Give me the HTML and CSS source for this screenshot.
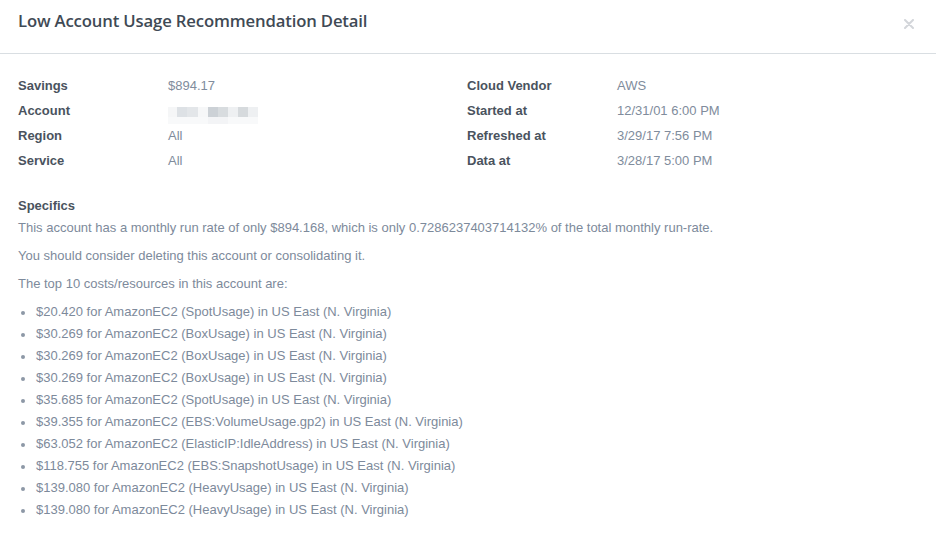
FILE: index.html
```html
<!DOCTYPE html>
<html>
<head>
<meta charset="utf-8">
<link rel="stylesheet" href="styles.css">
</head>
<body>
<div class="modal">
  <div class="modal-header">
    <h1 class="title">Low Account Usage Recommendation Detail</h1>
    <svg class="close" width="10" height="10" viewBox="0 0 10 10"><path d="M1 1 L9 9 M9 1 L1 9" stroke="#d3d6da" stroke-width="2" stroke-linecap="round"/></svg>
  </div>
  <div class="modal-body">
    <div class="details">
      <div class="col">
        <div class="row"><span class="label">Savings</span><span class="value">$894.17</span></div>
        <div class="row"><span class="label">Account</span><span class="value"><span class="mosaic">
          <span class="tiles"><i class="t t1"></i><i class="t t2"></i><i class="t t3"></i><i class="t t4"></i><i class="t t5"></i><i class="t t6"></i><i class="t t7"></i><i class="t t8"></i><i class="t t9"></i></span>
          <span class="tiles low"><i class="t"></i><i class="t"></i><i class="t"></i><i class="t"></i><i class="t t5l"></i><i class="t t5l"></i><i class="t"></i><i class="t"></i><i class="t"></i></span>
        </span></span></div>
        <div class="row"><span class="label">Region</span><span class="value">All</span></div>
        <div class="row"><span class="label">Service</span><span class="value">All</span></div>
      </div>
      <div class="col">
        <div class="row"><span class="label">Cloud Vendor</span><span class="value">AWS</span></div>
        <div class="row"><span class="label">Started at</span><span class="value">12/31/01 6:00 PM</span></div>
        <div class="row"><span class="label">Refreshed at</span><span class="value">3/29/17 7:56 PM</span></div>
        <div class="row"><span class="label">Data at</span><span class="value">3/28/17 5:00 PM</span></div>
      </div>
    </div>
    <div class="specifics">
      <h2 class="spec-title">Specifics</h2>
      <p>This account has a monthly run rate of only $894.168, which is only 0.7286237403714132% of the total monthly run-rate.</p>
      <p>You should consider deleting this account or consolidating it.</p>
      <p>The top 10 costs/resources in this account are:</p>
      <ul class="list">
        <li>$20.420 for AmazonEC2 (SpotUsage) in US East (N. Virginia)</li>
        <li>$30.269 for AmazonEC2 (BoxUsage) in US East (N. Virginia)</li>
        <li>$30.269 for AmazonEC2 (BoxUsage) in US East (N. Virginia)</li>
        <li>$30.269 for AmazonEC2 (BoxUsage) in US East (N. Virginia)</li>
        <li>$35.685 for AmazonEC2 (SpotUsage) in US East (N. Virginia)</li>
        <li>$39.355 for AmazonEC2 (EBS:VolumeUsage.gp2) in US East (N. Virginia)</li>
        <li>$63.052 for AmazonEC2 (ElasticIP:IdleAddress) in US East (N. Virginia)</li>
        <li>$118.755 for AmazonEC2 (EBS:SnapshotUsage) in US East (N. Virginia)</li>
        <li>$139.080 for AmazonEC2 (HeavyUsage) in US East (N. Virginia)</li>
        <li>$139.080 for AmazonEC2 (HeavyUsage) in US East (N. Virginia)</li>
      </ul>
    </div>
  </div>
</div>
</body>
</html>
```

FILE: styles.css
```css
* { box-sizing: border-box; }
html, body { margin: 0; padding: 0; background: #fff; }
body {
  font-family: "Liberation Sans", Arial, sans-serif;
  font-size: 13px;
  color: #7d8a9b;
}
.modal { width: 936px; }
.modal-header {
  height: 54px;
  border-bottom: 1px solid #d9dee2;
  display: flex;
  align-items: flex-start;
  justify-content: space-between;
  padding: 0 22px 0 18px;
}
.title {
  margin: 9px 0 0;
  font-family: "Open Sans", sans-serif;
  font-weight: 600;
  font-size: 16.7px;
  line-height: 24px;
  color: #3f4a55;
  letter-spacing: -0.15px;
}
.close { margin-top: 19px; display: block; }
.modal-body { padding: 19px 18px 0; }
.details { display: flex; }
.col { width: 449px; }
.row { display: flex; height: 25px; align-items: center; }
.label {
  width: 150px;
  font-weight: bold;
  color: #4a535e;
}
.value { color: #808c9c; }
.mosaic {
  display: flex;
  flex-direction: column;
  position: relative;
  top: 5px;
}
.tiles { display: flex; height: 10px; }
.tiles.low { height: 7px; }
.t { display: block; width: 10px; background: #f8f9fa; }
.t1 { width: 9px; background: #f5f6f7; }
.t2 { background: #dde1e5; }
.t3 { width: 11px; background: #e3e6e9; }
.t4 { background: #f6f7f8; }
.t5 { background: #ccd1d6; }
.t6 { background: #d8dcdf; }
.t7 { background: #eef0f2; }
.t8 { background: #d6dadd; }
.t9 { background: #eef0f2; }
.t5l { background: #f3f4f6; }
.specifics { margin-top: 22px; }
.spec-title {
  margin: 0;
  font-size: 13px;
  font-weight: bold;
  line-height: 22px;
  color: #4a535e;
}
.specifics p { margin: 0 0 6px; line-height: 22px; }
.list { margin: 0; padding: 0; list-style: none; }
.list li {
  position: relative;
  line-height: 22px;
  padding-left: 18px;
}
.list li::before {
  content: "";
  position: absolute;
  left: 3px;
  top: 10px;
  width: 4px;
  height: 4px;
  border-radius: 50%;
  background: #8d98a6;
}
```
